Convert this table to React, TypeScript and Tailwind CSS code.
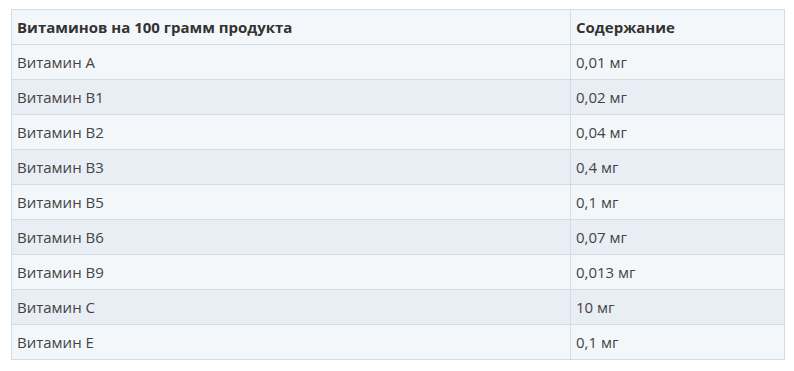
const rows = [
  ['Витамин A', '0,01 мг'],
  ['Витамин B1', '0,02 мг'],
  ['Витамин B2', '0,04 мг'],
  ['Витамин B3', '0,4 мг'],
  ['Витамин B5', '0,1 мг'],
  ['Витамин B6', '0,07 мг'],
  ['Витамин B9', '0,013 мг'],
  ['Витамин C', '10 мг'],
  ['Витамин E', '0,1 мг'],
]

export default function App() {
  return (
    <div className="bg-white pl-[11px] pt-[9px] font-['Open_Sans',sans-serif] text-[15px] text-[#444]">
      <table className="w-[774px] border-collapse">
        <thead>
          <tr className="h-[35px] bg-[#f4f7fa]">
            <th className="w-[559px] border border-[#d3dde6] px-[5px] text-left font-bold text-[#333]">
              Витаминов на 100 грамм продукта
            </th>
            <th className="border border-[#d3dde6] px-[5px] text-left font-bold text-[#333]">Содержание</th>
          </tr>
        </thead>
        <tbody>
          {rows.map(([name, value], i) => (
            <tr key={name} className={i % 2 === 0 ? 'h-[35px] bg-[#f4f7fa]' : 'h-[35px] bg-[#e9eef4]'}>
              <td className="border border-[#d3dde6] px-[5px]">{name}</td>
              <td className="border border-[#d3dde6] px-[5px]">{value}</td>
            </tr>
          ))}
        </tbody>
      </table>
    </div>
  )
}
